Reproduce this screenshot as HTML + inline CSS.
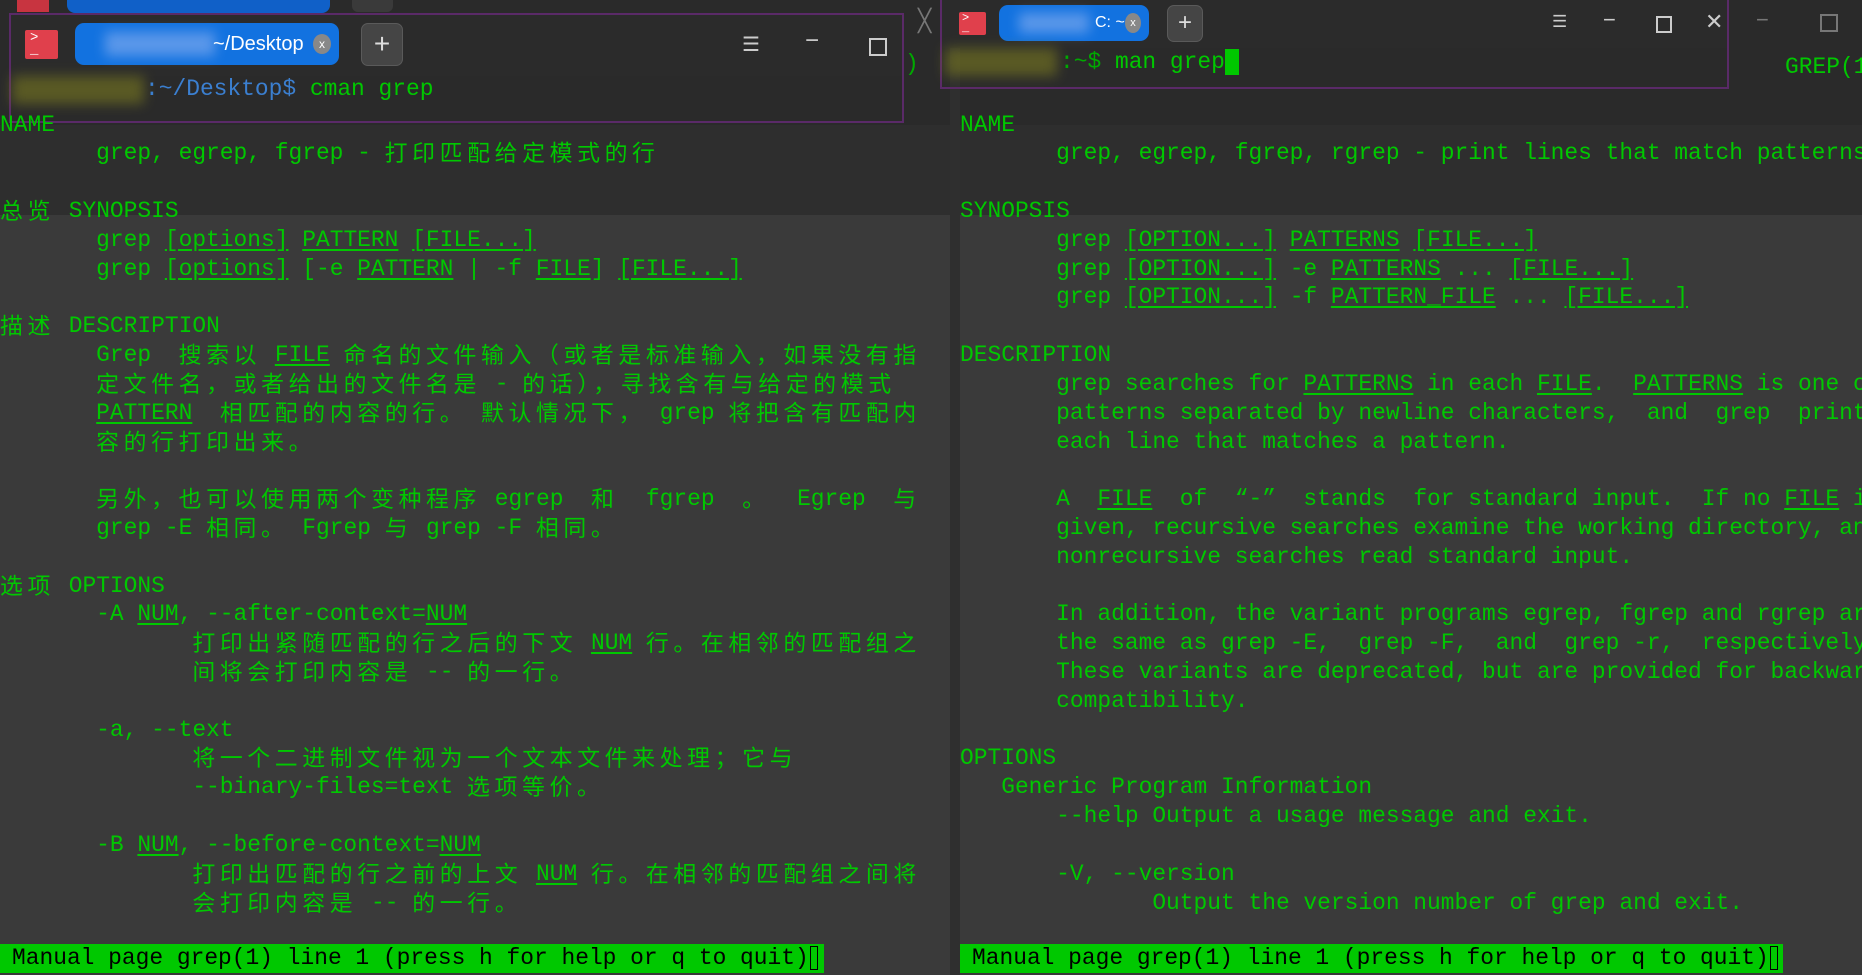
<!DOCTYPE html>
<html><head><meta charset="utf-8">
<style>
html,body{margin:0;padding:0}
body{width:1862px;height:975px;overflow:hidden;background:#3a3a3a;position:relative;font-family:"Liberation Mono","Noto Sans CJK SC",monospace}
.band{position:absolute;left:0;width:1862px}
pre{margin:0;position:absolute;top:110.6px;font-family:"Liberation Mono","Noto Sans CJK SC",monospace;font-size:22.9px;line-height:28.82px;color:#00c800;white-space:pre}
.c{font-family:"Noto Sans CJK SC",sans-serif;letter-spacing:4.6px;font-size:22.9px;line-height:10px;position:relative;top:2px}
u{text-decoration:underline;text-underline-offset:3px}
.st{position:absolute;top:944px;height:28.7px;background:#00c800;color:#000;font-size:22.9px;line-height:28.7px;padding-left:12px;box-sizing:border-box;white-space:nowrap;overflow:hidden}
.st i{display:inline-block;width:8px;height:24px;border:1px solid #000;vertical-align:middle;margin-left:1px;box-sizing:border-box}
.win{position:absolute;border:2px solid #5a2a68;box-sizing:border-box}
.tb{position:absolute;background:#2b2b2b}
.ico{position:absolute;background:#e0404c;border-radius:2px;color:#fff;font-size:16px;line-height:16px}
.tab{position:absolute;background:#1272e0;border-radius:9px;color:#fff;font-family:"Liberation Sans",sans-serif}
.plus{position:absolute;background:#454545;border:1px solid #5a5a5a;border-radius:7px;color:#ddd;text-align:center;font-family:"Liberation Sans",sans-serif}
.btn{position:absolute;color:#ccc;font-family:"Liberation Sans",sans-serif}
.blur{position:absolute;background:#7a7a20;filter:blur(6px);opacity:.6}
</style></head><body>
<div class="band" style="top:0;height:215px;background:#2e2e2e"></div>
<div class="band" style="top:0;height:125px;background:#2a2a2a"></div>
<div style="position:absolute;left:950px;top:0;width:10px;height:975px;background:#2f2f2f"></div>

<div style="position:absolute;left:17px;top:0;width:32px;height:12px;background:#c83440"></div>
<div style="position:absolute;left:67px;top:0;width:263px;height:13px;background:#1060c8;border-radius:0 0 8px 8px"></div>
<div style="position:absolute;left:352px;top:0;width:41px;height:12px;background:#3a3a3a;border-radius:0 0 6px 6px"></div>
<div class="btn" style="left:918px;top:8px;font-size:22px;color:#777">╳</div>

<div class="win" style="left:9px;top:13px;width:895px;height:110px"></div>
<div class="tb" style="left:11px;top:15px;width:891px;height:61px"></div>
<div class="ico" style="left:25px;top:30px;width:33px;height:29px;padding:2px 5px;box-sizing:border-box;font-size:14px;line-height:12px">&gt;<br>_</div>
<div class="tab" style="left:75px;top:23px;width:264px;height:42px;font-size:20px;line-height:42px"><span class="blur" style="left:30px;top:9px;width:110px;height:24px;background:#8ab0f0"></span><span style="position:absolute;left:138px">~/Desktop</span><span style="position:absolute;left:238px;top:11px;width:18px;height:20px;border-radius:50%;background:#888;font-size:12px;line-height:20px;text-align:center">x</span></div>
<div class="plus" style="left:361px;top:23px;width:40px;height:41px;font-size:28px;line-height:40px">+</div>
<div class="btn" style="left:742px;top:32px;font-size:20px">☰</div>
<div class="btn" style="left:805px;top:27px;font-size:24px">−</div>
<div class="btn" style="left:869px;top:38px;width:14px;height:14px;border:2px solid #ccc"></div>
<div class="blur" style="left:12px;top:76px;width:132px;height:28px"></div>
<pre style="top:75px;left:145px"><span style="color:#3b7fd0">:~/Desktop$</span> cman grep</pre>
<pre style="top:50px;left:905px;color:#0a0">)</pre>

<div class="win" style="left:940px;top:-2px;width:789px;height:91px"></div>
<div class="tb" style="left:942px;top:0;width:785px;height:48px"></div>
<div class="ico" style="left:959px;top:12px;width:27px;height:23px;padding:1px 3px;box-sizing:border-box;font-size:12px;line-height:10px">&gt;<br>_</div>
<div class="tab" style="left:999px;top:5px;width:150px;height:36px;font-size:16px;line-height:36px"><span class="blur" style="left:20px;top:8px;width:70px;height:20px;background:#8ab0f0"></span><span style="position:absolute;left:96px">C: ~</span><span style="position:absolute;left:126px;top:8px;width:16px;height:20px;border-radius:50%;background:#888;font-size:11px;line-height:20px;text-align:center">x</span></div>
<div class="plus" style="left:1167px;top:5px;width:34px;height:35px;font-size:24px;line-height:34px">+</div>
<div class="btn" style="left:1552px;top:12px;font-size:17px">☰</div>
<div class="btn" style="left:1603px;top:7px;font-size:22px">−</div>
<div class="btn" style="left:1656px;top:16px;width:12px;height:13px;border:2px solid #ccc"></div>
<div class="btn" style="left:1705px;top:9px;font-size:22px">✕</div>
<div class="btn" style="left:1756px;top:7px;font-size:22px;color:#777">−</div>
<div class="btn" style="left:1820px;top:14px;width:14px;height:14px;border:2px solid #777"></div>
<div class="blur" style="left:945px;top:48px;width:112px;height:28px"></div>
<pre style="top:48px;left:1060px"><span style="color:#0a0">:~$</span> man grep<span style="background:#00c800">&nbsp;</span></pre>
<pre style="top:53px;left:1785px">GREP(1</pre>

<pre style="left:0">NAME
       grep, egrep, fgrep - <span class="c">打印匹配给定模式的行</span>

<span class="c">总览</span> SYNOPSIS
       grep <u>[options]</u> <u>PATTERN</u> <u>[FILE...]</u>
       grep <u>[options]</u> [-e <u>PATTERN</u> | -f <u>FILE</u>] <u>[FILE...]</u>

<span class="c">描述</span> DESCRIPTION
       Grep  <span class="c">搜索以</span> <u>FILE</u> <span class="c">命名的文件输入（或者是标准输入，如果没有指</span>
       <span class="c">定文件名，或者给出的文件名是</span> - <span class="c">的话），寻找含有与给定的模式</span>
       <u>PATTERN</u>  <span class="c">相匹配的内容的行。</span> <span class="c">默认情况下，</span> grep <span class="c">将把含有匹配内</span>
       <span class="c">容的行打印出来。</span>

       <span class="c">另外，也可以使用两个变种程序</span> egrep  <span class="c">和</span>  fgrep  <span class="c">。</span>  Egrep  <span class="c">与</span>
       grep -E <span class="c">相同。</span> Fgrep <span class="c">与</span> grep -F <span class="c">相同。</span>

<span class="c">选项</span> OPTIONS
       -A <u>NUM</u>, --after-context=<u>NUM</u>
              <span class="c">打印出紧随匹配的行之后的下文</span> <u>NUM</u> <span class="c">行。在相邻的匹配组之</span>
              <span class="c">间将会打印内容是</span> -- <span class="c">的一行。</span>

       -a, --text
              <span class="c">将一个二进制文件视为一个文本文件来处理；它与</span>
              --binary-files=text <span class="c">选项等价。</span>

       -B <u>NUM</u>, --before-context=<u>NUM</u>
              <span class="c">打印出匹配的行之前的上文</span> <u>NUM</u> <span class="c">行。在相邻的匹配组之间将</span>
              <span class="c">会打印内容是</span> -- <span class="c">的一行。</span></pre>

<div style="position:absolute;left:960px;top:0;width:902px;height:975px;overflow:hidden">
<pre style="left:0">NAME
       grep, egrep, fgrep, rgrep - print lines that match patterns

SYNOPSIS
       grep <u>[OPTION...]</u> <u>PATTERNS</u> <u>[FILE...]</u>
       grep <u>[OPTION...]</u> -e <u>PATTERNS</u> ... <u>[FILE...]</u>
       grep <u>[OPTION...]</u> -f <u>PATTERN_FILE</u> ... <u>[FILE...]</u>

DESCRIPTION
       grep searches for <u>PATTERNS</u> in each <u>FILE</u>.  <u>PATTERNS</u> is one of
       patterns separated by newline characters,  and  grep  prints
       each line that matches a pattern.

       A  <u>FILE</u>  of  “-”  stands  for standard input.  If no <u>FILE</u> is
       given, recursive searches examine the working directory, and
       nonrecursive searches read standard input.

       In addition, the variant programs egrep, fgrep and rgrep are
       the same as grep -E,  grep -F,  and  grep -r,  respectively.
       These variants are deprecated, but are provided for backward
       compatibility.

OPTIONS
   Generic Program Information
       --help Output a usage message and exit.

       -V, --version
              Output the version number of grep and exit.</pre>
</div>

<div class="st" style="left:0;width:824px">Manual page grep(1) line 1 (press h for help or q to quit)<i></i></div>
<div class="st" style="left:960px;width:823px">Manual page grep(1) line 1 (press h for help or q to quit)<i></i></div>
</body></html>
